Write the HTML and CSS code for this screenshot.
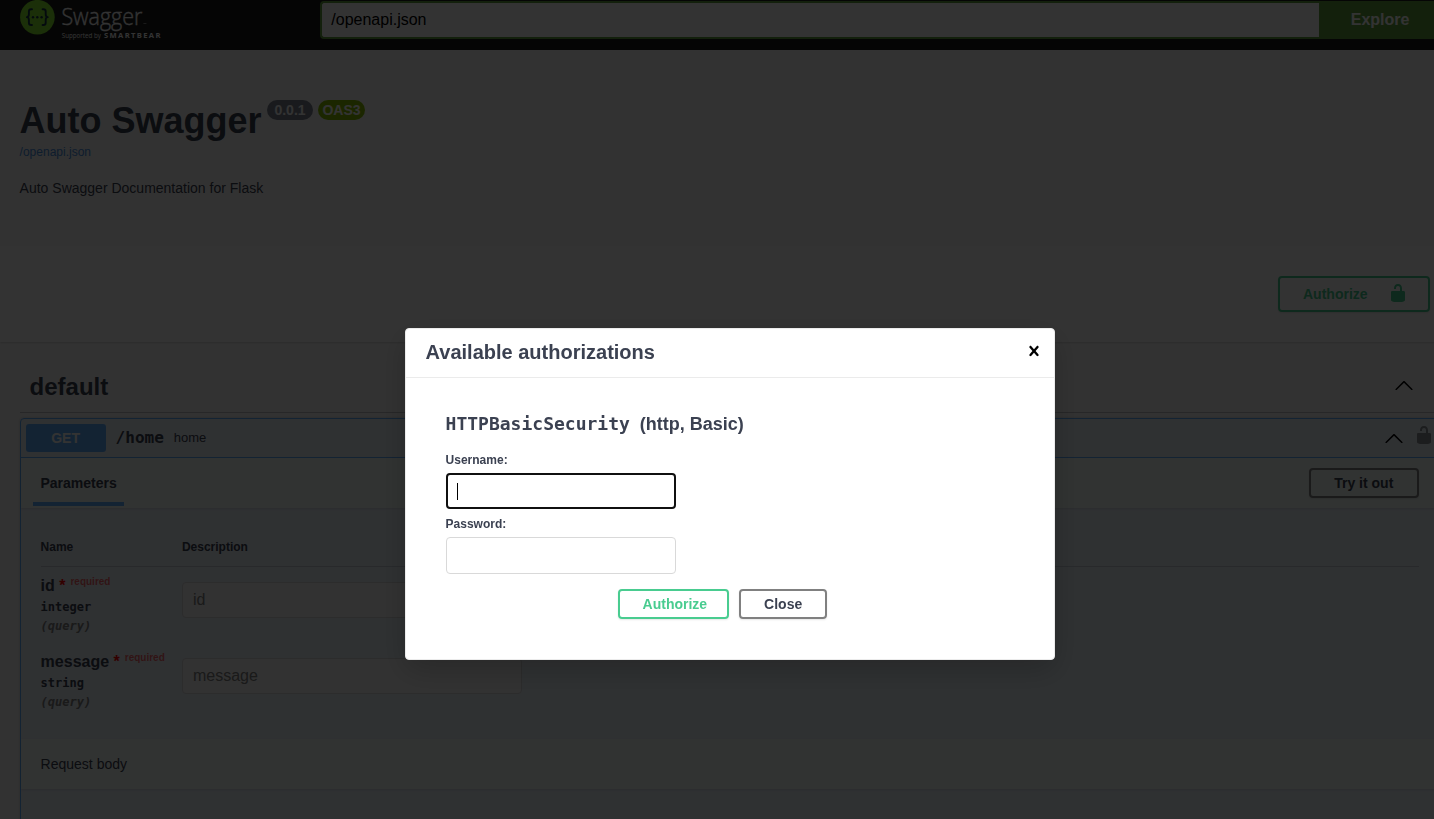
FILE: index.html
```html
<!DOCTYPE html>
<html lang="en">
<head>
<meta charset="utf-8">
<title>Swagger UI</title>
<link rel="stylesheet" href="styles.css">
</head>
<body>
<svg width="0" height="0" class="defs">
  <symbol id="unlocked" viewBox="0 0 20 20"><path d="M15.8 8H14V5.6C14 2.703 12.665 1 10 1 7.334 1 6 2.703 6 5.6V6h2v-.801C8 3.754 8.797 3 10 3c1.203 0 2 .754 2 2.199V8H4c-.553 0-1 .646-1 1.199V17c0 .549.428 1.139.951 1.307l1.197.387C5.672 18.861 6.55 19 7.1 19h5.8c.549 0 1.428-.139 1.951-.307l1.196-.387c.524-.167.953-.757.953-1.306V9.199C17 8.646 16.352 8 15.8 8z"/></symbol>
  <symbol id="arrow-up" viewBox="0 0 20 20"><path d="M17.418 14.908c.272.268.709.268.979 0s.271-.701 0-.969l-7.908-7.83c-.27-.268-.707-.268-.979 0l-7.908 7.83c-.27.268-.27.701 0 .969.271.268.709.268.979 0L10 7.767l7.418 7.141z"/></symbol>
  <symbol id="close" viewBox="0 0 20 20"><path d="M14.348 14.849c-.469.469-1.229.469-1.697 0L10 11.819l-2.651 3.029c-.469.469-1.229.469-1.697 0-.469-.469-.469-1.229 0-1.697l2.758-3.15-2.759-3.152c-.469-.469-.469-1.228 0-1.697.469-.469 1.228-.469 1.697 0L10 8.183l2.651-3.031c.469-.469 1.228-.469 1.697 0 .469.469.469 1.229 0 1.697l-2.758 3.152 2.758 3.15c.469.469.469 1.229 0 1.698z"/></symbol>
</svg>

<div class="page">
  <header class="topbar">
    <svg class="logo" width="150" height="50" viewBox="0 0 150 50">
      <circle cx="17.4" cy="17.2" r="17.3" fill="#85ea2d"/>
      <g fill="none" stroke="#173647" stroke-width="1.9" stroke-linecap="round" stroke-linejoin="round">
        <path d="M12 9.2h-.8c-1.6 0-2.3.8-2.3 2.3v2.8c0 1.8-.6 2.7-2 2.8 1.4.1 2 1 2 2.8v2.8c0 1.5.7 2.3 2.3 2.3h.8"/>
        <path d="M22.6 9.2h.8c1.6 0 2.3.8 2.3 2.3v2.8c0 1.8.6 2.7 2 2.8-1.4.1-2 1-2 2.8v2.8c0 1.5-.7 2.3-2.3 2.3h-.8"/>
      </g>
      <g fill="#173647"><circle cx="13" cy="17.2" r="1.2"/><circle cx="17.3" cy="17.2" r="1.2"/><circle cx="21.6" cy="17.2" r="1.2"/></g>
      <text class="logo-name" x="41.4" y="24.5" textLength="81" lengthAdjust="spacingAndGlyphs">Swagger</text>
      <path d="M123.4 23.6h3" stroke="#fff" stroke-width=".8" opacity=".6"/>
      <text class="logo-by" x="41.8" y="38" textLength="39" lengthAdjust="spacingAndGlyphs">Supported by</text>
      <text class="logo-brand" x="84" y="38.2" textLength="56.4">SMARTBEAR</text>
    </svg>
    <div class="spec-url">/openapi.json</div>
    <div class="explore">Explore</div>
  </header>

  <section class="info">
    <h2 class="title">Auto Swagger<span class="pill">0.0.1</span><span class="pill pill-oas">OAS3</span></h2>
    <a class="link">/openapi.json</a>
    <p class="description">Auto Swagger Documentation for Flask</p>
  </section>

  <section class="scheme">
    <div class="btn authorize authorize-main"><span>Authorize</span><svg width="20" height="20"><use href="#unlocked"/></svg></div>
  </section>

  <main class="operations">
    <h3 class="tag"><span>default</span><svg width="20" height="20"><use href="#arrow-up"/></svg></h3>
    <article class="opblock">
      <div class="summary">
        <span class="method">GET</span>
        <span class="path">/home</span>
        <span class="summary-text">home</span>
        <svg class="arrow" width="20" height="20"><use href="#arrow-up"/></svg>
        <svg class="lock" width="20" height="20"><use href="#unlocked"/></svg>
      </div>
      <div class="section-header">
        <div class="tab">Parameters</div>
        <div class="btn try">Try it out</div>
      </div>
      <div class="parameters">
        <div class="row head"><span>Name</span><span>Description</span></div>
        <div class="row">
          <div>
            <div class="name">id<span class="star">*</span><span class="required">required</span></div>
            <div class="type">integer</div>
            <div class="in">(query)</div>
          </div>
          <div class="field">id</div>
        </div>
        <div class="row">
          <div>
            <div class="name">message<span class="star">*</span><span class="required">required</span></div>
            <div class="type">string</div>
            <div class="in">(query)</div>
          </div>
          <div class="field">message</div>
        </div>
      </div>
      <div class="section-header body-header">Request body</div>
    </article>
  </main>
</div>

<div class="backdrop">
  <div class="modal">
    <div class="modal-header"><h3>Available authorizations</h3><svg width="20" height="20"><use href="#close"/></svg></div>
    <div class="modal-content">
      <h4><code>HTTPBasicSecurity</code><span>(http, Basic)</span></h4>
      <label>Username:</label>
      <div class="input focused"><span class="caret"></span></div>
      <label>Password:</label>
      <div class="input"></div>
      <div class="actions"><div class="btn authorize submit">Authorize</div><div class="btn dismiss">Close</div></div>
    </div>
  </div>
</div>
</body>
</html>
```

FILE: styles.css
```css
* { box-sizing: border-box; }
html, body { height: 100%; overflow: hidden; }
body {
  margin: 0;
  background: #fafafa;
  color: #3b4151;
  font-family: "Liberation Sans", Arial, sans-serif;
}
h2, h3, h4, p { margin: 0; }
svg { display: block; flex: none; }
.defs { position: absolute; }
.page { width: 1460px; height: 819px; margin-left: -.4px; overflow: hidden; }

.topbar { display: flex; height: 50px; padding-left: 20px; background: #1b1b1b; }
.logo { margin-right: 150px; }
.logo-name { font: 300 23px "Open Sans", sans-serif; fill: #fff; stroke: #fff; stroke-width: .35px; }
.logo-by { font: 400 6.5px "Open Sans", sans-serif; fill: #fff; }
.logo-brand { font: 700 7.6px "Open Sans", sans-serif; fill: #fff; }
.spec-url {
  width: 999px; height: 38px; margin-top: 1px; padding: 0 9.7px;
  border: 2px solid #62a03f; border-right: 0; border-radius: 4px 0 0 4px;
  background: #fff; color: #000; font-size: 16px; line-height: 34px;
}
.explore {
  width: 122px; height: 38px; margin-top: 1px; padding-left: 1px; background: #62a03f;
  color: #fff; font-size: 16px; font-weight: 700; line-height: 38px; text-align: center;
}

.info { height: 196px; padding: 50px 20px 0; }
.title { display: flex; align-items: flex-start; font-size: 36px; line-height: 41px; }
.pill {
  height: 20px; margin-left: 5px; padding: 0 7.5px; border-radius: 10px;
  background: #7d8492; color: #fff; font-size: 14px; line-height: 20px;
}
.title .pill:first-of-type { margin-left: 5.3px; }
.pill-oas { padding: 0 4.4px; background: #89bf04; }
.link { display: block; margin-top: 4px; color: #4990e2; font-size: 12px; line-height: 14px; }
.description { margin-top: 21px; font-size: 14px; line-height: 16px; }

.scheme {
  display: flex; justify-content: flex-end; height: 96px; padding: 30px 30px;
  background: #fff; box-shadow: 0 1px 2px rgba(0, 0, 0, .15);
}
.btn {
  display: flex; align-items: center; height: 30px; padding: 0 23px;
  border: 2px solid #808080; border-radius: 4px; box-shadow: 0 1px 2px rgba(0, 0, 0, .1);
  font-size: 14px; font-weight: 700; white-space: nowrap;
}
.try { width: 110px; padding-left: 23.6px; }
.authorize { border-color: #49cc90; color: #49cc90; fill: #49cc90; }
.authorize-main { width: 152px; height: 36px; padding: 0 20px 0 23.4px; justify-content: space-between; }
.authorize-main svg { margin-bottom: 2px; }

.operations { padding: 20px 20px 0; }
.tag {
  display: flex; align-items: center; justify-content: space-between;
  height: 51px; padding: 0 26px 0 10px; border-bottom: 1px solid rgba(59, 65, 81, .3);
  font-size: 24px;
}
.tag svg { margin-bottom: 4px; }
.opblock {
  height: 500px; margin-top: 5px; border: 1px solid #61affe; border-radius: 4px;
  background: rgba(97, 175, 254, .1); box-shadow: 0 0 3px rgba(0, 0, 0, .19);
}
.summary { display: flex; align-items: center; height: 39px; padding: 0 5px; border-bottom: 1px solid #61affe; }
.method {
  width: 80px; height: 28px; border-radius: 3px; background: #61affe; color: #fff;
  font-size: 14px; font-weight: 700; line-height: 28px; text-align: center;
}
.path { margin: 0 0 2px 10px; font: 600 16px "DejaVu Sans Mono", monospace; }
.summary-text { margin: 0 0 2px 10px; font-size: 13px; }
.summary .arrow { margin: 0 10px 0 auto; }
.summary .lock { margin: 0 0 7px; opacity: .4; }
.section-header {
  display: flex; align-items: center; justify-content: space-between;
  height: 50px; padding: 0 20px 0 12px;
  background: #f5fdfa; box-shadow: 0 1px 2px rgba(0, 0, 0, .1);
}
.tab {
  height: 48px; margin-bottom: 2px; padding: 0 7.2px 0 7.9px; border-bottom: 4px solid #61affe;
  font-size: 14px; font-weight: 700; line-height: 50px;
}
.parameters { height: 231px; padding: 20px 20px 0; }
.row { display: grid; grid-template-columns: 141.3px 340px; height: 76px; padding-top: 10px; }
.head { height: 39px; padding-top: 12px; border-bottom: 1px solid rgba(59, 65, 81, .2); font-size: 12px; font-weight: 700; line-height: 14px; }
.name { display: flex; font-size: 16px; font-weight: 700; line-height: 18px; white-space: nowrap; }
.star { margin-left: 4.4px; color: #f00; }
.required { margin: -4px 0 0 5px; color: rgba(255, 0, 0, .6); font-size: 10px; }
.type, .in { font: 700 12px/14px "DejaVu Sans Mono", monospace; }
.type { margin-top: 5px; }
.in { margin-top: 5px; color: #808080; font-style: italic; }
.field {
  height: 36px; margin-top: 5px; padding-left: 10px;
  border: 1px solid #d9d9d9; border-radius: 4px; background: #fafafa;
  color: #808080; font-size: 16px; line-height: 34px;
}
.body-header { padding-left: 20px; font-size: 14px; }

.backdrop {
  position: fixed; inset: 0; display: flex; align-items: flex-start; justify-content: flex-start;
  padding: 328px 0 0 404.6px; background: rgba(0, 0, 0, .8);
}
.modal {
  width: 650px; height: 332px; border: 1px solid #ebebeb; border-radius: 4px;
  background: #fff; box-shadow: 0 10px 30px rgba(0, 0, 0, .2);
}
.modal-header {
  display: flex; align-items: center; justify-content: space-between;
  height: 49px; padding: 0 10px 0 20px; border-bottom: 1px solid #ebebeb;
}
.modal-header h3 { margin-bottom: 2px; font-size: 20px; line-height: 23px; }
.modal-header svg { margin-bottom: 5px; }
.modal-content { padding: 35px 40px 0; }
.modal h4 { display: flex; align-items: baseline; height: 21px; font-size: 18px; line-height: 21px; }
.modal code { margin-right: 10px; font: 700 18px/21px "DejaVu Sans Mono", monospace; }
.modal label { display: block; font-size: 12px; font-weight: 700; line-height: 14px; margin-top: 8px; }
.modal h4 + label { margin-top: 19px; }
.input { width: 230px; height: 37px; margin-top: 6px; border: 1px solid #d9d9d9; border-radius: 4px; }
.focused { display: flex; align-items: center; height: 36px; padding-left: 9px; border: 2px solid #101010; }
.caret { width: 1px; height: 17px; background: #000; }
.actions { display: flex; gap: 10px; margin: 15px 0 0 172px; }
.submit { width: 111px; }
.dismiss { width: 88px; padding-left: 23.5px; }
```
